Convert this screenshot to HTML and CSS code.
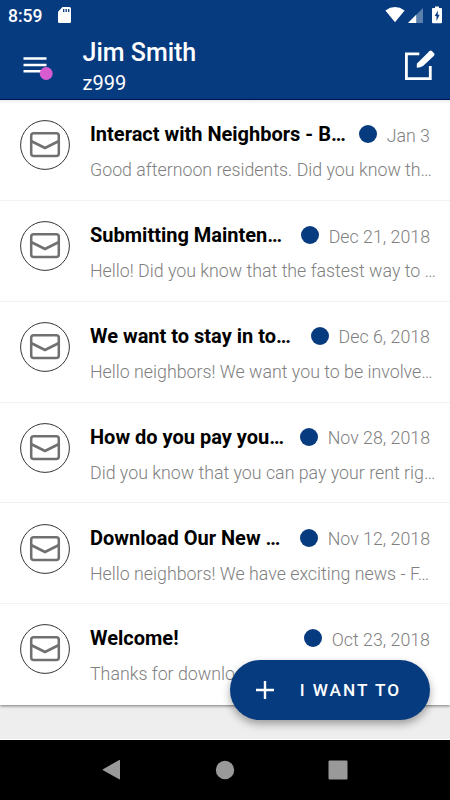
FILE: index.html
```html
<!DOCTYPE html>
<html lang="en">
<head>
  <meta charset="UTF-8">
  <meta name="viewport" content="width=device-width, initial-scale=1.0">
  <title>Messages</title>
  <link rel="stylesheet" href="styles.css">
</head>
<body>
  <svg class="sprite" width="0" height="0">
    <symbol id="mail" viewBox="0 0 50 50">
      <circle cx="25" cy="25" r="24.4" fill="#fff" stroke="#333" stroke-width="1"/>
      <rect x="11.2" y="13.2" width="27.6" height="22.8" rx="2.5" fill="none" stroke="#707070" stroke-width="2.5"/>
      <path d="M11 21L25 28L39 21" fill="none" stroke="#707070" stroke-width="2.7"/>
    </symbol>
  </svg>

  <header>
    <div class="status-bar">
      <span class="clock">8:59</span>
      <svg class="sd-card" width="13" height="16" viewBox="0 0 13 16">
        <path d="M4.5 0H11.5Q13 0 13 1.5V14.5Q13 16 11.5 16H1.5Q0 16 0 14.5V4.7Z" fill="#fff"/>
        <path d="M5.7 2V5M8.2 2V5M10.7 2V5" stroke="#073b80" stroke-width="1.3"/>
      </svg>
      <svg class="signals" width="58" height="18" viewBox="0 0 58 18">
        <path d="M0.4 4.4Q10 -2.4 19.6 4.4L10 16.2Z" fill="#fff"/>
        <path d="M38 2V17H23Z" fill="#5b80ae"/>
        <path d="M31.2 8.8V17H23Z" fill="#fff"/>
        <path d="M50 0.5H54V2H56Q57 2 57 3V16.2Q57 17.2 56 17.2H48Q47 17.2 47 16.2V3Q47 2 48 2H50Z" fill="#fff"/>
        <path d="M53 4.5L49.7 10H51.5V15L54.6 8.8H52.7Z" fill="#073b80"/>
      </svg>
    </div>
    <div class="toolbar">
      <svg class="menu" width="32" height="26" viewBox="0 0 32 26">
        <path d="M1.5 3.5H24.5M1.5 10H24.5M1.5 16.3H24.5" stroke="#fff" stroke-width="2.5"/>
        <circle cx="24.2" cy="18.5" r="6.5" fill="#d65cd0"/>
      </svg>
      <div class="user">
        <h1>Jim Smith</h1>
        <p>z999</p>
      </div>
      <svg class="compose" width="32" height="32" viewBox="0 0 32 32">
        <path d="M15.3 4.8H2.4V29.7H26.3V17" fill="none" stroke="#fff" stroke-width="2.8"/>
        <path d="M12.8 18.7V14.7L25.3 2.2Q26.6 1 28 2.2L30 4.2Q31 5.4 30 6.7L19 17Q16.5 18.6 12.8 18.7Z" fill="#fff"/>
      </svg>
    </div>
  </header>

  <main>
    <div class="message-list">
      <div class="message">
        <svg class="mail-icon"><use href="#mail"/></svg>
        <div class="message-text">
          <div class="message-top"><h2>Interact with Neighbors - B…</h2><span class="dot"></span><span class="date">Jan 3</span></div>
          <p>Good afternoon residents. Did you know th…</p>
        </div>
      </div>
      <div class="message">
        <svg class="mail-icon"><use href="#mail"/></svg>
        <div class="message-text">
          <div class="message-top"><h2>Submitting Mainten…</h2><span class="dot"></span><span class="date">Dec 21, 2018</span></div>
          <p>Hello! Did you know that the fastest way to …</p>
        </div>
      </div>
      <div class="message">
        <svg class="mail-icon"><use href="#mail"/></svg>
        <div class="message-text">
          <div class="message-top"><h2>We want to stay in to…</h2><span class="dot"></span><span class="date">Dec 6, 2018</span></div>
          <p>Hello neighbors! We want you to be involve…</p>
        </div>
      </div>
      <div class="message">
        <svg class="mail-icon"><use href="#mail"/></svg>
        <div class="message-text">
          <div class="message-top"><h2>How do you pay you…</h2><span class="dot"></span><span class="date">Nov 28, 2018</span></div>
          <p>Did you know that you can pay your rent rig…</p>
        </div>
      </div>
      <div class="message">
        <svg class="mail-icon"><use href="#mail"/></svg>
        <div class="message-text">
          <div class="message-top"><h2>Download Our New …</h2><span class="dot"></span><span class="date">Nov 12, 2018</span></div>
          <p>Hello neighbors! We have exciting news - F…</p>
        </div>
      </div>
      <div class="message">
        <svg class="mail-icon"><use href="#mail"/></svg>
        <div class="message-text">
          <div class="message-top"><h2>Welcome!</h2><span class="dot"></span><span class="date">Oct 23, 2018</span></div>
          <p>Thanks for downloading our new mobile a…</p>
        </div>
      </div>
    </div>
    <button class="fab">
      <svg width="18" height="18" viewBox="0 0 18 18">
        <path d="M9 0V18M0 9H18" stroke="#fff" stroke-width="2.4"/>
      </svg>
      <span>I WANT TO</span>
    </button>
  </main>

  <nav>
    <svg width="20" height="22" viewBox="0 0 20 22"><path d="M1 10.2L17.2 1Q18 0.8 18 1.5V20Q18 20.7 17.2 20.3L1 11.2Q0 10.7 1 10.2Z" fill="#999"/></svg>
    <svg width="20" height="20" viewBox="0 0 20 20"><circle cx="10" cy="10" r="9.2" fill="#999"/></svg>
    <svg width="20" height="20" viewBox="0 0 20 20"><rect x="0.5" y="0.5" width="19" height="19" rx="1" fill="#999"/></svg>
  </nav>
</body>
</html>
```
FILE: styles.css
```css
* {
  box-sizing: border-box;
}
body {
  font-family: Roboto, sans-serif;
  margin: 0;
  height: 800px;
  display: flex;
  flex-direction: column;
  overflow: hidden;
  background: #eee;
}
h1, h2, p {
  margin: 0;
}
.sprite {
  display: none;
}
header {
  height: 100px;
  background: #073b80;
  border-bottom: 1px solid #00145c;
  color: white;
}
.status-bar {
  height: 30px;
  padding: 0 7px 0 8px;
  display: flex;
  align-items: center;
}
.clock {
  width: 50px;
  font-size: 17.5px;
  font-weight: 500;
  padding-top: 1px;
}
.signals {
  margin-left: auto;
}
.toolbar {
  height: 69px;
  display: flex;
  padding: 0 14px 0 22px;
}
.menu {
  margin-top: 25px;
}
.user {
  margin-left: 28.5px;
  padding-top: 8px;
}
.user h1 {
  font-size: 25px;
  font-weight: 500;
  line-height: 30px;
}
.user p {
  font-size: 20px;
  line-height: 30px;
}
.compose {
  margin: 19px 0 0 auto;
}
main {
  height: 640px;
  position: relative;
  border-bottom: 1px solid white;
}
.message-list {
  background: white;
  box-shadow: 0 1px 3px rgba(0, 0, 0, 0.5);
}
.message {
  height: 100.85px;
  padding: 20.2px 0 0 20px;
  border-bottom: 1px solid #f2f2f2;
  display: flex;
  gap: 20px;
}
.message:first-child {
  background: linear-gradient(#eee, white 4px);
}
.message:last-child {
  border-bottom: none;
}
.mail-icon {
  width: 50px;
  height: 50px;
}
.message-text {
  width: 340px;
  white-space: nowrap;
}
.message-top {
  height: 29px;
  display: flex;
  align-items: center;
}
h2 {
  font-size: 20px;
  font-weight: 700;
  line-height: 29px;
}
.dot {
  width: 18px;
  height: 18px;
  margin: -1px 10px 0 auto;
  border-radius: 50%;
  background: #073b80;
}
.date {
  font-size: 17.8px;
  font-weight: 300;
  color: #808080;
  padding-top: 1px;
}
.message p {
  margin-top: 9px;
  font-size: 17.8px;
  font-weight: 300;
  line-height: 24px;
  color: #808080;
}
.fab {
  position: absolute;
  right: 20px;
  bottom: 19px;
  width: 200px;
  height: 60px;
  padding: 0 31px 0 26px;
  display: flex;
  align-items: center;
  justify-content: space-between;
  border: none;
  border-radius: 30px;
  background: #073b80;
  color: white;
  font-family: Roboto, sans-serif;
  font-size: 17.2px;
  font-weight: 500;
  letter-spacing: 2px;
  box-shadow: 0 4px 8px rgba(0, 0, 0, 0.35);
}
.fab span {
  margin-right: -2px;
}
nav {
  height: 60px;
  background: black;
  display: flex;
  align-items: center;
  justify-content: center;
  gap: 93px;
}
```
